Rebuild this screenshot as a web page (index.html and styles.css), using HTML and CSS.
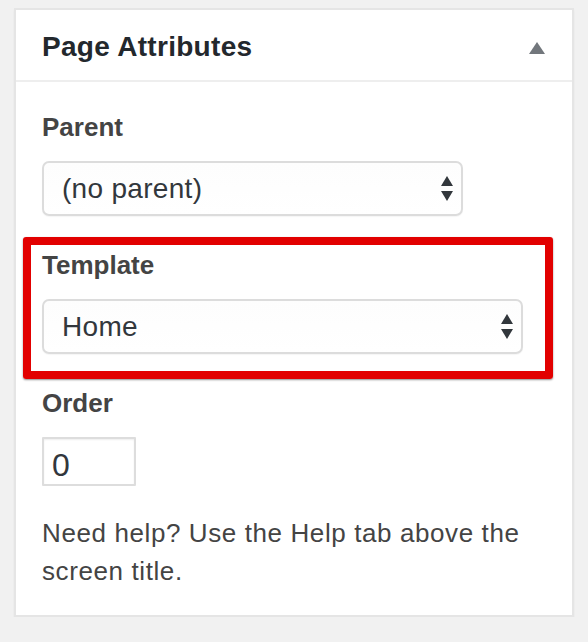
FILE: index.html
```html
<!DOCTYPE html>
<html lang="en">
<head>
<meta charset="utf-8">
<title>Page Attributes</title>
<link rel="stylesheet" href="styles.css">
</head>
<body>
  <div class="postbox">
    <div class="postbox-header">
      <h2 class="hndle">Page Attributes</h2>
      <svg class="toggle" width="16" height="12" viewBox="0 0 16 12" aria-hidden="true"><polygon points="8,0 16,12 0,12" fill="#72777c"/></svg>
    </div>
    <div class="inside">
      <div class="field">
        <p class="label">Parent</p>
        <div class="select select-parent">
          <span class="select-value">(no parent)</span>
          <svg class="select-arrows" width="12" height="25" viewBox="0 0 12 25" aria-hidden="true"><polygon points="6,0 12,10 0,10" fill="#32373c"/><polygon points="0,15 12,15 6,25" fill="#32373c"/></svg>
        </div>
      </div>
      <div class="field field-highlight">
        <p class="label">Template</p>
        <div class="select select-template">
          <span class="select-value">Home</span>
          <svg class="select-arrows" width="12" height="25" viewBox="0 0 12 25" aria-hidden="true"><polygon points="6,0 12,10 0,10" fill="#32373c"/><polygon points="0,15 12,15 6,25" fill="#32373c"/></svg>
        </div>
      </div>
      <div class="field">
        <p class="label">Order</p>
        <div class="input-order">0</div>
      </div>
      <p class="help">Need help? Use the Help tab above the screen title.</p>
    </div>
  </div>
</body>
</html>
```
FILE: styles.css
```css
html, body {
  margin: 0;
  padding: 0;
  background: #f1f1f1;
}

body {
  padding: 8px 14px 0;
  font-family: "Liberation Sans", Arial, sans-serif;
}

.postbox {
  background: #fff;
  border: 2px solid #e5e5e5;
  box-shadow: 0 2px 2px rgba(0, 0, 0, 0.05);
}

.postbox-header {
  box-sizing: border-box;
  height: 72px;
  padding: 3px 27px 0 26px;
  border-bottom: 2px solid #eeeeee;
  display: flex;
  align-items: center;
  justify-content: space-between;
}

.hndle {
  margin: 0;
  font-size: 28px;
  line-height: 32px;
  font-weight: bold;
  letter-spacing: 0.3px;
  color: #23282d;
}

.toggle {
  display: block;
  margin-top: 3px;
}

.inside {
  padding: 0 26px 25px;
}

.field {
  margin-top: 31px;
}

.field:first-child {
  margin-top: 27px;
}

.field-highlight {
  position: relative;
}

.field-highlight::after {
  content: "";
  position: absolute;
  top: -10px;
  left: -19px;
  right: -7px;
  bottom: -25px;
  border: 8px solid #e20000;
  border-radius: 3px;
  box-shadow: 0 1px 2px rgba(0, 0, 0, 0.45);
  pointer-events: none;
}

.label {
  margin: 0 0 16px;
  font-size: 26px;
  line-height: 36px;
  font-weight: bold;
  color: #444444;
}

.select {
  box-sizing: border-box;
  height: 55px;
  border: 2px solid #dcdcdc;
  border-radius: 7px;
  background: linear-gradient(#fdfdfd, #ffffff);
  box-shadow: 0 1px 1px rgba(0, 0, 0, 0.04);
  padding: 0 8px 0 18px;
  display: flex;
  align-items: center;
  justify-content: space-between;
}

.select-parent {
  width: 421px;
}

.select-template {
  width: 481px;
}

.select-value {
  font-size: 28px;
  line-height: 32px;
  letter-spacing: 0.3px;
  color: #32373c;
}

.select-arrows {
  display: block;
}

.input-order {
  box-sizing: border-box;
  width: 94px;
  height: 49px;
  border: 2px solid #dddddd;
  border-radius: 1px;
  box-shadow: inset 0 1px 2px rgba(0, 0, 0, 0.07);
  padding: 6px 0 0 8px;
  display: flex;
  align-items: center;
  font-size: 32px;
  line-height: 36px;
  color: #32373c;
}

.help {
  margin: 28px 0 0;
  font-size: 26px;
  line-height: 38px;
  letter-spacing: 0.6px;
  color: #444444;
}
```
